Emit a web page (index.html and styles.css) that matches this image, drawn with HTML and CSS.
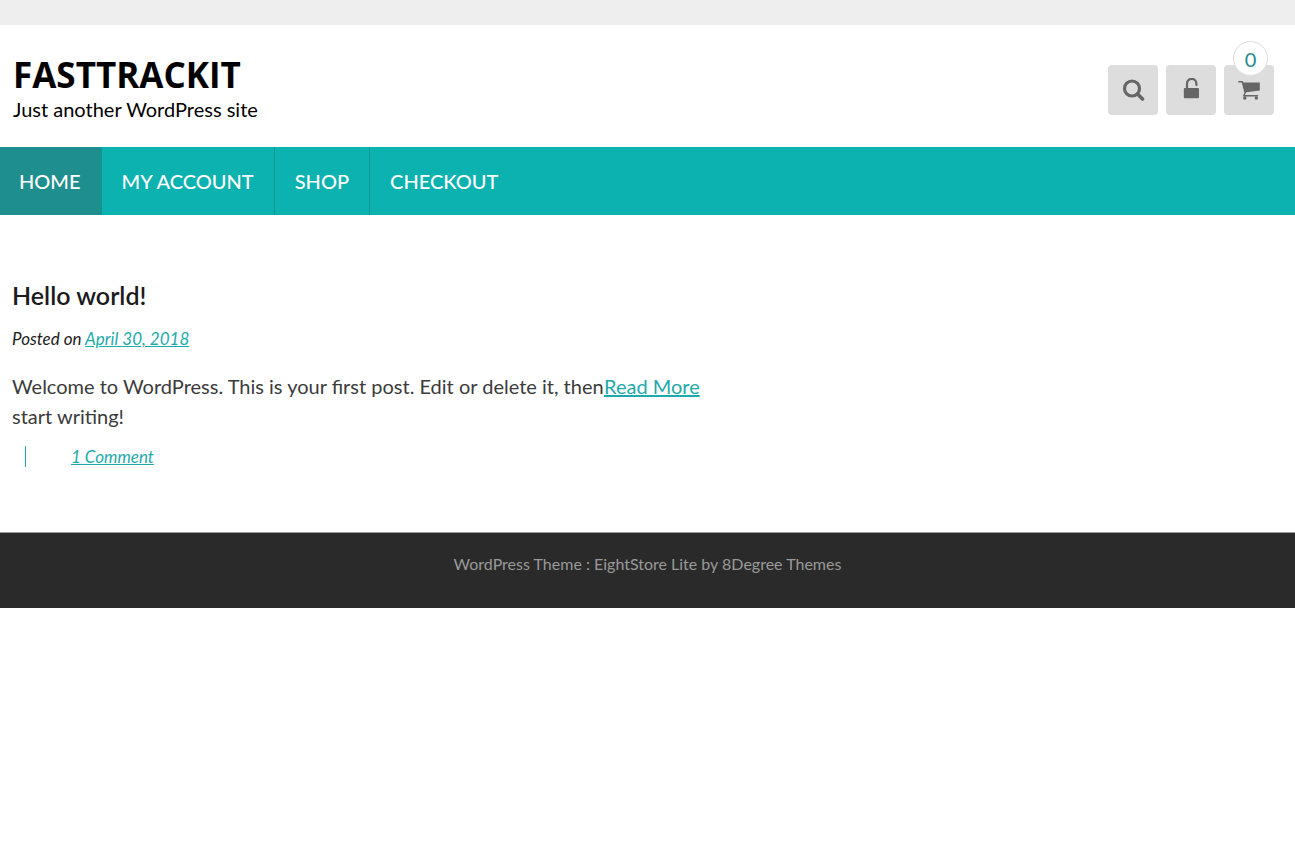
FILE: index.html
```html
<!DOCTYPE html>
<html lang="en">
<head>
<meta charset="utf-8">
<meta name="viewport" content="width=device-width, initial-scale=1">
<title>FASTTRACKIT</title>
<link rel="stylesheet" href="styles.css">
</head>
<body>
<div class="top-bar"></div>
<header class="site-header">
  <div class="branding">
    <h1 class="site-title">FASTTRACKIT</h1>
    <p class="site-tagline">Just another WordPress site</p>
  </div>
  <div class="header-tools">
    <button class="tool" type="button" aria-label="Search">
      <svg class="icon" viewBox="0 0 24 24"><circle cx="11" cy="10.500" r="7.500" fill="none" stroke="currentColor" stroke-width="3.200"/><path d="M16.500 16 21.500 21" stroke="currentColor" stroke-width="3.600" stroke-linecap="round"/></svg>
    </button>
    <a class="tool" href="#login" aria-label="Log in">
      <svg class="icon" viewBox="0 0 24 24"><path d="M8 11V5.500a4.700 4.700 0 0 1 9.400 0V7" fill="none" stroke="currentColor" stroke-width="2.200" stroke-linecap="round"/><rect x="4.800" y="10" width="15.200" height="10.200" rx="1" fill="currentColor"/></svg>
    </a>
    <a class="tool" href="#cart" aria-label="Cart, 0 items">
      <svg class="icon" viewBox="0 0 24 24"><path d="M1.800 3.800H5.300L8.300 14.500 6.800 17.800H20.500" fill="none" stroke="currentColor" stroke-width="1.500" stroke-linecap="round" stroke-linejoin="round"/><path d="M5.500 4.500H22.800V12.500L7.600 14.500Z" fill="currentColor"/><circle cx="7.800" cy="20" r="1.700" fill="currentColor"/><circle cx="19.300" cy="20" r="1.700" fill="currentColor"/></svg>
      <span class="cart-count">0</span>
    </a>
  </div>
</header>
<nav class="main-nav">
  <a class="nav-link current" href="#home">HOME</a>
  <a class="nav-link" href="#account">MY ACCOUNT</a>
  <a class="nav-link" href="#shop">SHOP</a>
  <a class="nav-link" href="#checkout">CHECKOUT</a>
</nav>
<main class="content">
  <article>
    <h2 class="post-title">Hello world!</h2>
    <p class="post-date">Posted on <a href="#date">April 30, 2018</a></p>
    <div class="post-body">
      <p class="excerpt">Welcome to WordPress. This is your first post. Edit or delete it, then start writing!</p>
      <a class="read-more" href="#post">Read More</a>
    </div>
    <div class="post-meta"><a class="comments" href="#comments">1 Comment</a></div>
  </article>
</main>
<footer class="site-footer">WordPress Theme : EightStore Lite by 8Degree Themes</footer>
</body>
</html>
```
FILE: styles.css
```css
* { box-sizing: border-box; }
body {
  margin: 0;
  background: #fff;
  color: #3b3b3b;
  font: 20px/30px Lato, sans-serif;
}
h1, h2, p { margin: 0; }
a { color: #1eaaaa; }

.top-bar { height: 25px; background: #eee; }

.site-header {
  display: flex;
  justify-content: space-between;
  align-items: flex-start;
  padding: 27px 21px 27px 13px;
  color: #000;
}
.site-title { font: 700 35px/46px "Open Sans", sans-serif; }
.site-tagline { line-height: 22px; }
.header-tools { display: flex; gap: 8px; padding-top: 13px; }
.tool {
  position: relative;
  display: flex;
  align-items: center;
  justify-content: center;
  width: 50px;
  height: 50px;
  padding: 0;
  border: 0;
  border-radius: 4px;
  background: #ddd;
  color: #666;
}
.icon { width: 24px; height: 24px; }
.cart-count {
  position: absolute;
  top: -24px;
  right: 6px;
  width: 35px;
  height: 35px;
  border: 1px solid #ddd;
  border-radius: 50%;
  background: #fff;
  color: #1e8c8c;
  line-height: 35px;
  text-align: center;
}

.main-nav { display: flex; background: #0cb2b0; }
.nav-link {
  padding: 0 20px;
  border-right: 1px solid #0a9896;
  color: #fff;
  font-weight: 500;
  line-height: 68px;
  text-decoration: none;
}
.nav-link:last-child { border-right: 0; }
.current { padding-left: 19px; background: #1e8e8e; }

.content { padding: 61px 12px 65px; }
.post-title { color: #1b1b1b; font-size: 25px; font-weight: 600; line-height: 38px; }
.post-date { padding: 10px 0 17px; color: #1b1b1b; font-size: 17px; font-style: italic; }
.post-body { display: flex; align-items: flex-start; }
.excerpt { max-width: 592px; }
.read-more { text-decoration-thickness: 2px; white-space: nowrap; }
.post-meta { display: flex; padding: 15px 13px 0; }
.comments {
  padding-left: 45px;
  border-left: 1px solid currentColor;
  font-size: 17px;
  font-style: italic;
  line-height: 21px;
}

.site-footer {
  padding: 16px 13px 29px;
  border-top: 1px solid #999;
  background: #2a2a2a;
  color: #999;
  font-size: 16px;
  text-align: center;
}
```
